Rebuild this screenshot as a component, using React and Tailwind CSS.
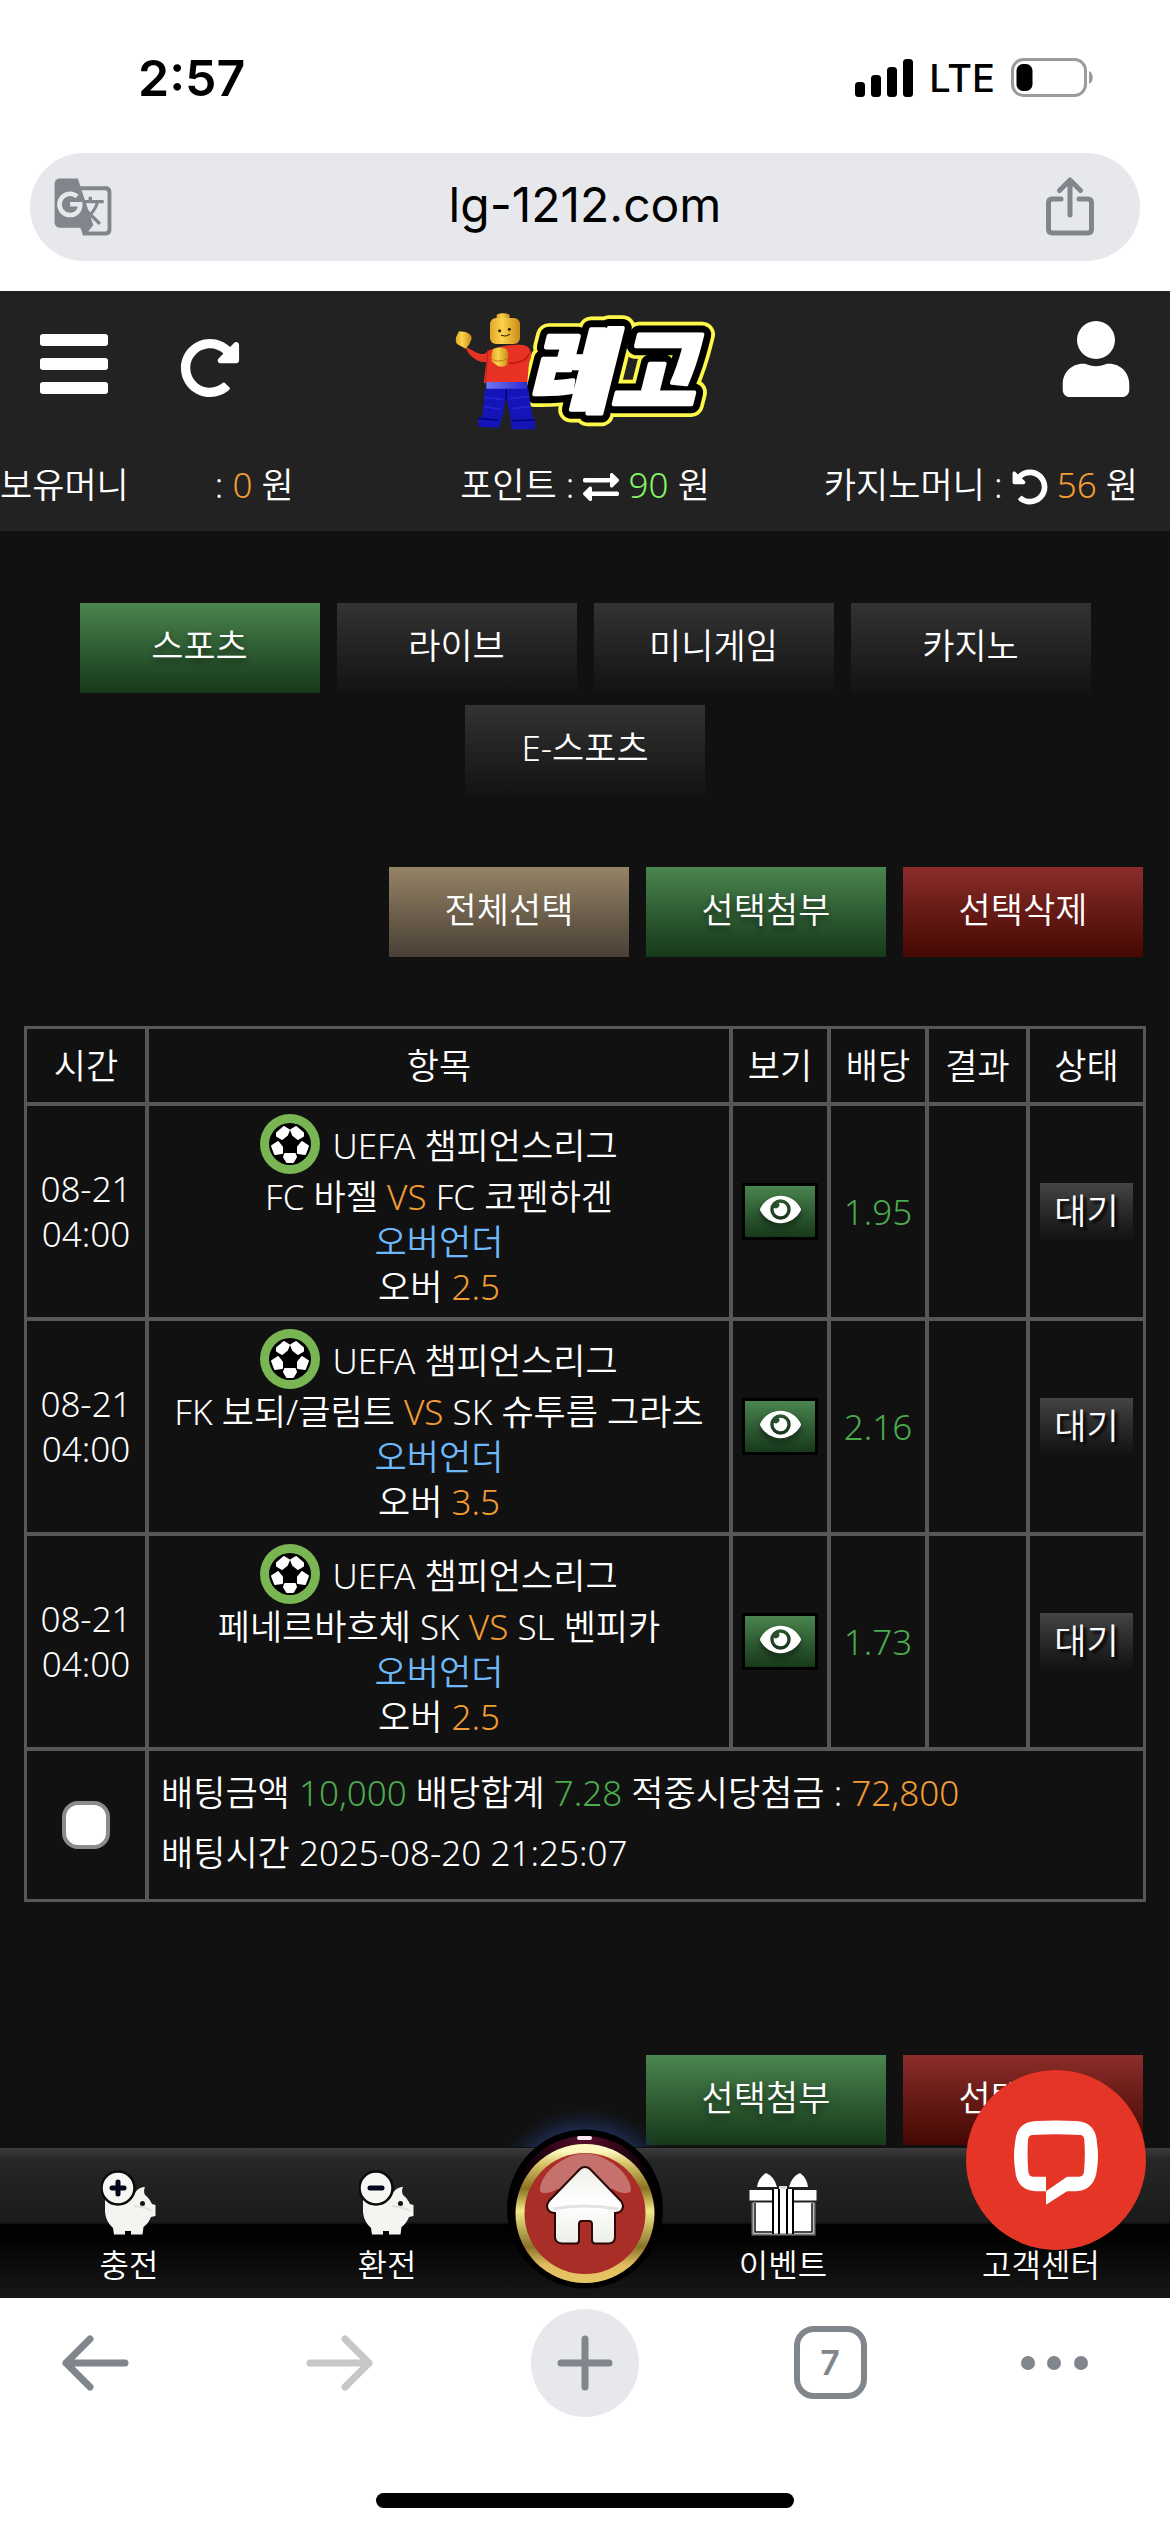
import React from "react";
import { FaRedoAlt, FaUndoAlt, FaExchangeAlt, FaUser, FaEye } from "react-icons/fa";
import { MdGTranslate } from "react-icons/md";

const GREEN = "bg-linear-to-b from-[#4a854f] to-[#17391b] [text-shadow:0_4px_6px_rgba(0,0,0,0.5)]";
const DARK = "bg-linear-to-b from-[#333333] to-[#131313]";
const TAN = "bg-linear-to-b from-[#968466] to-[#4a4036]";
const RED = "bg-linear-to-b from-[#8a2d29] to-[#450804]";

const tabs = [
  { label: "스포츠", tone: GREEN },
  { label: "라이브", tone: DARK },
  { label: "미니게임", tone: DARK },
  { label: "카지노", tone: DARK },
  { label: "E-스포츠", tone: DARK },
];

const bets = [
  { home: "FC 바젤", away: "FC 코펜하겐", line: "2.5", odds: "1.95" },
  { home: "FK 보되/글림트", away: "SK 슈투름 그라츠", line: "3.5", odds: "2.16" },
  { home: "페네르바흐체 SK", away: "SL 벤피카", line: "2.5", odds: "1.73" },
];

function StatusBar() {
  return (
    <div className="flex h-[153px] items-start justify-between pt-12 pr-[76px] pl-[138px] text-black">
      <span className="text-[50px] leading-[60px] font-semibold">2:57</span>
      <div className="flex h-[60px] items-center">
        <svg width="58" height="38" viewBox="0 0 58 38" aria-hidden="true">
          <rect x="0" y="23" width="10" height="15" rx="3.5" />
          <rect x="16" y="16" width="10" height="22" rx="3.5" />
          <rect x="32" y="8" width="10" height="30" rx="3.5" />
          <rect x="48" y="0" width="10" height="38" rx="3.5" />
        </svg>
        <span className="ml-4 text-[38px] leading-none font-medium">LTE</span>
        <svg className="ml-4" width="83" height="40" viewBox="0 0 83 40" aria-hidden="true">
          <rect x="1.5" y="1.5" width="73" height="36" rx="11" fill="none" stroke="#9b9b9b" strokeWidth="3" />
          <rect x="5.5" y="6" width="16" height="27" rx="6.5" />
          <path d="M78 13c5 2 5 11 0 13z" fill="#9b9b9b" />
        </svg>
      </div>
    </div>
  );
}

function AddressBar() {
  return (
    <div className="px-[30px] pb-[30px]">
      <div className="flex h-[108px] items-center justify-between rounded-full bg-[#e7e8ec] pr-[43px] pl-[22px]">
        <button type="button" aria-label="번역" className="w-[75px] text-[#80868b]">
          <MdGTranslate size={62} />
        </button>
        <a href="#address" className="pb-1 text-[48px] leading-none text-black">lg-1212.com</a>
        <button type="button" aria-label="공유" className="text-[#80868b]">
          <svg width="54" height="62" viewBox="0 0 54 62" fill="none" stroke="currentColor" strokeWidth="5" strokeLinecap="round" strokeLinejoin="round">
            <path d="M18 23H9Q5.500 23 5.500 27V53Q5.500 57 9.500 57H44.500Q48.500 57 48.500 53V27Q48.500 23 45 23H36" />
            <path d="M27 39V5M16.500 14.500L27 4L37.500 14.500" />
          </svg>
        </button>
      </div>
    </div>
  );
}

function Logo() {
  const text = {
    x: 244,
    y: 316,
    fontSize: 274,
    fontWeight: 900,
    fontStyle: "italic",
    strokeLinejoin: "round",
  };
  return (
    <svg className="overflow-visible font-['Noto_Sans_CJK_KR',sans-serif]" width="280" height="140" viewBox="0 0 840 420" role="img" aria-label="레고">
      <defs>
        <linearGradient id="skin" x1="0" y1="0" x2="1" y2="0">
          <stop offset="0" stopColor="#e3a528" />
          <stop offset=".4" stopColor="#fbd44c" />
          <stop offset="1" stopColor="#c98b16" />
        </linearGradient>
        <linearGradient id="belt" x1="0" y1="0" x2="1" y2="0">
          <stop offset="0" stopColor="#7474f5" />
          <stop offset="1" stopColor="#2b2bd0" />
        </linearGradient>
      </defs>
      <text {...text} fill="#fdf84a" stroke="#fdf84a" strokeWidth="76">레고</text>
      <text {...text} fill="#000" stroke="#000" strokeWidth="54">레고</text>
      <text {...text} fill="#fff" stroke="#fff" strokeWidth="12">레고</text>
      <path d="M62 140C82 150 96 162 118 162L130 152C160 136 220 130 245 138C262 150 262 170 252 186L247 248H116L124 186C100 188 78 172 66 152Z" fill="#e83223" />
      <path d="M128 150L122 246" stroke="#c01e14" strokeWidth="3" />
      <path d="M252 160C246 184 214 190 192 190" stroke="#ba1c12" strokeWidth="5" fill="none" />
      <path d="M42 94L62 96Q80 102 80 116L72 134L62 146L36 132Q28 118 36 106Z" fill="url(#skin)" />
      <path d="M155 44Q174 36 194 44V60H155Z" fill="url(#skin)" />
      <rect x="135" y="54" width="90" height="78" rx="18" fill="url(#skin)" />
      <circle cx="164" cy="92" r="4.500" fill="#2b1c04" />
      <circle cx="193" cy="88" r="4.500" fill="#2b1c04" />
      <path d="M168 106Q182 112 195 103" stroke="#2b1c04" strokeWidth="3" fill="none" />
      <path d="M144 148Q158 138 184 146Q192 160 188 174L186 194Q170 206 152 194L140 184Q138 162 144 148Z" fill="url(#skin)" />
      <path d="M142 178Q160 190 186 176" stroke="#b87d14" strokeWidth="3" fill="none" />
      <path d="M124 246H247V268H124Z" fill="url(#belt)" />
      <path d="M120 266H250L262 350L270 358V388H200L196 350L190 320L184 292L172 352L160 384L100 380V354L112 350Z" fill="#1414b8" />
      <path d="M118 292L174 298M116 320L170 328M196 296L252 290M200 326L256 320" stroke="#2424d0" strokeWidth="5" />
      <path d="M184 268V300M100 356L158 360M202 362L270 360" stroke="#00006e" strokeWidth="4" />
    </svg>
  );
}

function SiteHeader() {
  return (
    <header className="bg-[#222222] pt-[9px] pb-[22px]">
      <div className="grid grid-cols-3 items-start px-10">
        <div className="flex gap-[72px] pt-[34px]">
          <button type="button" aria-label="메뉴" className="self-start">
            <svg width="68" height="60" viewBox="0 0 68 60" fill="#fff">
              <rect width="68" height="12" rx="3" />
              <rect y="24" width="68" height="12" rx="3" />
              <rect y="48" width="68" height="12" rx="3" />
            </svg>
          </button>
          <button type="button" aria-label="새로고침" className="pt-1"><FaRedoAlt size={60} /></button>
        </div>
        <a href="#home" className="justify-self-center"><Logo /></a>
        <button type="button" aria-label="내 정보" className="justify-self-end pt-[21px]"><FaUser size={76} className="w-[68px]" /></button>
      </div>
      <div className="mt-[22px] grid grid-cols-3 whitespace-nowrap">
        <div className="flex gap-[86px]">
          <span>보유머니</span>
          <span>: <span className="text-[#f39c34]">0</span> 원</span>
        </div>
        <div className="text-center">
          포인트 : <button type="button" aria-label="포인트 전환" className="align-middle"><FaExchangeAlt size={36} className="mb-1" /></button>{" "}
          <span className="text-[#83f566]">90</span> 원
        </div>
        <div className="pr-8 text-right">
          카지노머니 : <button type="button" aria-label="카지노머니 새로고침" className="align-middle"><FaUndoAlt size={36} className="mb-1" /></button>{" "}
          <span className="text-[#f39c34]">56</span> 원
        </div>
      </div>
    </header>
  );
}

function ActionButton({ tone, children }) {
  return (
    <button type="button" className={`h-[90px] w-60 shrink-0 pb-1 ${tone}`}>{children}</button>
  );
}

function SoccerIcon() {
  return (
    <svg width="60" height="60" viewBox="0 0 60 60" aria-hidden="true">
      <circle cx="30" cy="30" r="30" fill="#79b552" />
      <circle cx="30" cy="30" r="21" fill="#000" />
      <g fill="#fff" stroke="#fff" strokeWidth="2" strokeLinejoin="round">
        <path d="M17 19L24 13L29 16L27 21L22 25L17 22Z" />
        <path d="M43 19L36 13L31 16L33 21L38 25L43 22Z" />
        <path d="M12 32L18 28L22 33L22 39L15 40Z" />
        <path d="M48 32L42 28L38 33L38 39L45 40Z" />
        <path d="M25 40H35L36 43L33 48H27L24 43Z" />
      </g>
    </svg>
  );
}

const CELL = "border-2 border-[#575757] p-0 font-[350]";

function BetTable() {
  return (
    <table className="w-full table-fixed border-separate border-spacing-0 border border-[#575757] text-center">
      <colgroup>
        <col className="w-[122px]" />
        <col />
        <col className="w-[98px]" />
        <col className="w-[98px]" />
        <col className="w-[101px]" />
        <col className="w-[117px]" />
      </colgroup>
      <thead>
        <tr className="h-[77px]">
          {["시간", "항목", "보기", "배당", "결과", "상태"].map((h) => (
            <th key={h} scope="col" className={CELL}>{h}</th>
          ))}
        </tr>
      </thead>
      <tbody>
        {bets.map((b) => (
          <tr key={b.home} className="h-[215px]">
            <td className={CELL}>08-21<br />04:00</td>
            <td className={`${CELL} whitespace-nowrap`}>
              <div className="flex h-[60px] items-center justify-center gap-3">
                <SoccerIcon />
                <span className="pt-1">UEFA 챔피언스리그</span>
              </div>
              <div>{b.home} <span className="text-[#f39c34]">VS</span> {b.away}</div>
              <div className="text-[#6db8f8]">오버언더</div>
              <div>오버 <span className="text-[#f39c34]">{b.line}</span></div>
            </td>
            <td className={CELL}>
              <button type="button" aria-label="보기" className={`inline-flex h-[57px] w-[76px] items-center justify-center border-3 border-black pb-1 align-middle ${GREEN}`}>
                <FaEye size={41} className="drop-shadow-[0_4px_3px_rgba(0,0,0,0.5)]" />
              </button>
            </td>
            <td className={`${CELL} text-[#4caa4f]`}>{b.odds}</td>
            <td className={CELL}></td>
            <td className={CELL}>
              <span className="inline-block h-[57px] w-[93px] bg-linear-to-b from-[#444444] to-[#121212] align-middle leading-[55px] [text-shadow:3px_3px_3px_#000]">대기</span>
            </td>
          </tr>
        ))}
        <tr className="h-[152px]">
          <td className={CELL}>
            <input type="checkbox" aria-label="배팅 선택" className="block size-12 mx-auto appearance-none rounded-2xl border-4 border-[#8b8b8b] bg-white checked:bg-[#4caa4f]" />
          </td>
          <td colSpan={5} className={`${CELL} pb-1 pl-3 text-left leading-[60px]`}>
            배팅금액 <span className="text-[#4caa4f]">10,000</span> 배당합계 <span className="text-[#4caa4f]">7.28</span> 적중시당첨금 : <span className="text-[#f39c34]">72,800</span>
            <br />
            배팅시간 2025-08-20 21:25:07
          </td>
        </tr>
      </tbody>
    </table>
  );
}

function Piggy({ plus }) {
  return (
    <svg width="56" height="66" viewBox="0 0 56 66" aria-hidden="true">
      <path d="M4 30V42C5 51 9 55 12 58L13 64.500H24V61H30V64.500H41.500L42.500 57C47 54 48.500 50 50 47L54.500 46V35L51 34C49 30 47 27 44 25C42.500 22 43 19 44 17C40 17 35.500 19 33 25Z" fill="#f4f5f0" />
      <path d="M33 36Q44 37 51 41" stroke="#dfe0dc" strokeWidth="2" fill="none" />
      <circle cx="41.500" cy="33.500" r="2.500" fill="#111" />
      <circle cx="17" cy="18" r="16.500" fill="#f6f7f2" stroke="#0b0b0b" strokeWidth="2.500" />
      <path d={plus ? "M11 18H23M17 12V24" : "M11 18H23"} stroke="#05051c" strokeWidth="5" strokeLinecap="round" />
    </svg>
  );
}

function Gift() {
  return (
    <svg width="74" height="66" viewBox="0 0 74 66" aria-hidden="true">
      <rect x="6.500" y="31" width="62" height="33.500" fill="#fff" stroke="#777" strokeWidth="2" />
      <path d="M9 33V62H66V33" fill="none" stroke="#111" strokeWidth="1.500" />
      <rect x="2.500" y="19" width="69" height="12.500" fill="#fff" stroke="#222" strokeWidth="2" />
      <path d="M28 19H47V63H28Z" fill="#fff" />
      <path d="M27 19V64M33 19V64M41 19V64M47 19V64" stroke="#000" strokeWidth="2" />
      <path d="M11 17Q12 8 20 3Q28 6 31 17ZM62 17Q61 8 54 3Q46 6 43 17Z" fill="#fff" />
      <path d="M33 16H41V19H33Z" fill="#ddd" />
    </svg>
  );
}

function HomeBadge() {
  return (
    <svg width="240" height="200" viewBox="0 0 240 200" aria-hidden="true">
      <defs>
        <radialGradient id="glow" cx=".5" cy=".5" r=".5">
          <stop offset=".7" stopColor="#2b4a94" stopOpacity=".6" />
          <stop offset="1" stopColor="#1b2c5c" stopOpacity="0" />
        </radialGradient>
        <linearGradient id="gold" x1="0" y1="0" x2="0" y2="1">
          <stop offset=".05" stopColor="#fdf9c0" />
          <stop offset=".14" stopColor="#d9c56a" />
          <stop offset=".32" stopColor="#8a7120" />
          <stop offset=".48" stopColor="#f2e886" />
          <stop offset=".74" stopColor="#8a742a" />
          <stop offset=".87" stopColor="#e0bd5e" />
          <stop offset="1" stopColor="#e8c765" />
        </linearGradient>
        <linearGradient id="roof" x1="0" y1="0" x2="0" y2="1">
          <stop offset="0" stopColor="#eeefe9" />
          <stop offset=".5" stopColor="#ffffff" />
          <stop offset="1" stopColor="#eceee6" />
        </linearGradient>
        <radialGradient id="wine" cx=".5" cy="0" r=".5">
          <stop offset="0" stopColor="#5a0d2c" />
          <stop offset="1" stopColor="#050003" />
        </radialGradient>
        <clipPath id="above"><rect width="240" height="38" /></clipPath>
      </defs>
      <ellipse cx="120" cy="94" rx="96" ry="96" fill="url(#glow)" clipPath="url(#above)" />
      <ellipse cx="120" cy="100" rx="78" ry="79.500" fill="#000" />
      <circle cx="120" cy="100" r="73" fill="url(#wine)" />
      <rect x="112" y="27" width="15" height="4" rx="2" fill="#ffe6f2" />
      <circle cx="120" cy="104.500" r="69.500" fill="url(#gold)" />
      <circle cx="120" cy="104.500" r="60.500" fill="#aa2e28" />
      <path d="M75 82C74 66 98 44.500 120 44.500S167 66 166 82C162 86 154 84 148 80H92C86 84 78 86 75 82Z" fill="#fff" fillOpacity=".32" />
      <path d="M120 58Q123 58 125 60L156 92Q160 98 156 102Q154 104 150 104V128Q150 134 144 134.500H130Q127 134.500 127 131V115Q127 112 124 112H117Q114 112 114 115V131Q114 134.500 111 134.500H97Q90 134 90 128V104Q86 104 84 102Q80 98 84 92L115 60Q117 58 120 58Z" fill="url(#roof)" stroke="#2a0806" strokeWidth="2" />
      <path d="M88 100Q120 94 153 100" stroke="#e2e3e0" strokeWidth="3" fill="none" />
    </svg>
  );
}

function NavItem({ icon, label }) {
  return (
    <a href={`#${label}`} className="flex flex-1 flex-col items-center pt-[22px] text-[32px] leading-[46px]">
      <span className="flex h-[72px] items-start">{icon}</span>
      <span>{label}</span>
    </a>
  );
}

function BottomNav() {
  return (
    <nav className="relative flex h-[150px] bg-[linear-gradient(to_bottom,#3c3c3c_0px,#262626_12px,#1b1b1b_74px,#000000_77px,#020202_90px,#181818_150px)]">
      <NavItem label="충전" icon={<Piggy plus />} />
      <NavItem label="환전" icon={<Piggy />} />
      <a href="#home" aria-label="홈" className="flex w-[138px] shrink-0 justify-center">
        <span className="relative -top-[39px] -mx-[51px] block h-[200px] w-60"><HomeBadge /></span>
      </a>
      <NavItem label="이벤트" icon={<Gift />} />
      <NavItem label="고객센터" icon={null} />
      <button type="button" aria-label="채팅 상담" className="absolute right-6 bottom-12 size-[180px] rounded-full bg-[#e43526]">
        <svg viewBox="0 0 180 180" fill="#fff" fillRule="evenodd">
          <path d="M70 51Q90 50 110 51Q130 52 131 73Q133 86 131 99Q129 120 110 121.300H101L80 134.700V121.300H70Q50 120 49 99Q47 86 49 73Q50 52 70 51ZM66 65Q62.300 65.500 62 70Q61 86 62.300 101Q62.500 106.700 67 106.700H80V121.300L101 106.700H113Q118 106.700 118 101Q119.500 86 118.300 70Q118 65 114 65Q90 63.500 66 65Z" />
        </svg>
      </button>
    </nav>
  );
}

function BrowserToolbar() {
  const box = "flex size-[108px] items-center justify-center";
  const stroke = { fill: "none", stroke: "currentColor", strokeWidth: 7, strokeLinecap: "round", strokeLinejoin: "round" };
  return (
    <div className="bg-white pt-[11px] pb-6 text-[#80868b]">
      <div className="flex justify-between px-[41px]">
        <button type="button" aria-label="뒤로" className={box}>
          <svg width="68" height="56" viewBox="0 0 68 56" {...stroke}><path d="M64 28H5M29 4L5 28L29 52" /></svg>
        </button>
        <button type="button" aria-label="앞으로" className={`${box} text-[#c7c7c7]`}>
          <svg width="68" height="56" viewBox="0 0 68 56" {...stroke}><path d="M4 28H63M39 4L63 28L39 52" /></svg>
        </button>
        <button type="button" aria-label="새 탭" className={`${box} rounded-full bg-[#e7e8ec]`}>
          <svg width="56" height="56" viewBox="0 0 56 56" {...stroke}><path d="M4 28H52M28 4V52" /></svg>
        </button>
        <button type="button" aria-label="탭 7개" className={box}>
          <span className="flex size-[73px] items-center justify-center rounded-[20px] border-[6px] border-current text-[34px] leading-none font-semibold">7</span>
        </button>
        <button type="button" aria-label="더보기" className="flex h-[108px] w-[108px] items-center justify-start">
          <svg width="68" height="16" viewBox="0 0 68 16" fill="currentColor">
            <circle cx="7" cy="8" r="7" /><circle cx="33" cy="8" r="7" /><circle cx="60" cy="8" r="7" />
          </svg>
        </button>
      </div>
      <div className="mx-auto mt-[76px] h-[15px] w-[418px] rounded-full bg-black" />
    </div>
  );
}

export default function App() {
  return (
    <div className="min-h-screen bg-white font-[Inter,sans-serif]">
      <StatusBar />
      <AddressBar />
      <div className="bg-[#111111] font-['Noto_Sans','Noto_Sans_CJK_KR',sans-serif] text-[35px] leading-[45px] font-[350] text-white">
        <SiteHeader />
        <main className="pt-[72px] pb-[3px]">
          <div className="flex flex-wrap justify-center gap-x-[17px] gap-y-3 px-[70px]">
            {tabs.map((t) => <ActionButton key={t.label} tone={t.tone}>{t.label}</ActionButton>)}
          </div>
          <div className="mt-[72px] flex justify-end gap-[17px] pr-[27px]">
            <ActionButton tone={TAN}>전체선택</ActionButton>
            <ActionButton tone={GREEN}>선택첨부</ActionButton>
            <ActionButton tone={RED}>선택삭제</ActionButton>
          </div>
          <div className="mt-[69px] px-6"><BetTable /></div>
          <div className="mt-[153px] flex justify-end gap-[17px] pr-[27px]">
            <ActionButton tone={GREEN}>선택첨부</ActionButton>
            <ActionButton tone={RED}>선택삭제</ActionButton>
          </div>
        </main>
        <BottomNav />
      </div>
      <BrowserToolbar />
    </div>
  );
}
